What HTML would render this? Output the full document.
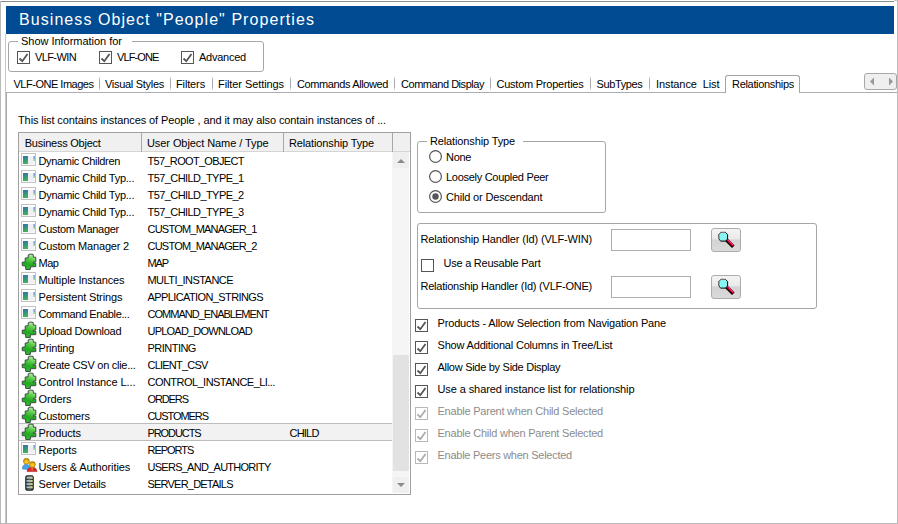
<!DOCTYPE html>
<html><head><meta charset="utf-8"><style>
html,body{margin:0;padding:0;background:#fff;width:898px;height:524px;overflow:hidden;position:relative}
.t{position:absolute;white-space:pre;font-family:"Liberation Sans", sans-serif;}
</style></head><body>
<div style="position:absolute;left:0;top:1px;width:894px;height:1px;background:#8e8e8e"></div>
<div style="position:absolute;left:894px;top:0;width:4px;height:1px;background:#c8c8c8"></div>
<div style="position:absolute;left:0;top:1px;width:1px;height:523px;background:#bababa"></div>
<div style="position:absolute;left:897px;top:0;width:1px;height:524px;background:#bcbcbc"></div>
<div style="position:absolute;left:0;top:523px;width:898px;height:1px;background:#b8b8b8"></div>
<div style="position:absolute;left:6px;top:92px;width:1px;height:431px;background:#abadb3"></div>
<div style="position:absolute;left:6px;top:6px;width:888px;height:28px;background:#004b91"></div>
<div style="position:absolute;left:5px;top:34px;width:1px;height:489px;background:#c6c6c6"></div>
<div style="position:absolute;left:8px;top:41px;width:254px;height:29px;border:1px solid #a6a6a6;border-radius:3px"></div>
<div style="position:absolute;left:18px;top:36px;width:114px;height:10px;background:#fff"></div>
<svg style="position:absolute;left:17px;top:51px" width="13" height="13" viewBox="0 0 13 13"><rect x="0.5" y="0.5" width="12" height="12" fill="#fff" stroke="#555"/><path d="M2.5 7.5 L5.3 10.2 L10.5 3" fill="none" stroke="#555" stroke-width="1.8"/></svg>
<svg style="position:absolute;left:99px;top:51px" width="13" height="13" viewBox="0 0 13 13"><rect x="0.5" y="0.5" width="12" height="12" fill="#fff" stroke="#555"/><path d="M2.5 7.5 L5.3 10.2 L10.5 3" fill="none" stroke="#555" stroke-width="1.8"/></svg>
<svg style="position:absolute;left:181px;top:51px" width="13" height="13" viewBox="0 0 13 13"><rect x="0.5" y="0.5" width="12" height="12" fill="#fff" stroke="#555"/><path d="M2.5 7.5 L5.3 10.2 L10.5 3" fill="none" stroke="#555" stroke-width="1.8"/></svg>
<div style="position:absolute;left:6px;top:92px;width:891px;height:1px;background:#abadb3"></div>
<div style="position:absolute;left:99px;top:76px;width:1px;height:15px;background:linear-gradient(#ffffff,#a8a8b0 25%,#a8a8b0 75%,#ffffff)"></div>
<div style="position:absolute;left:170px;top:76px;width:1px;height:15px;background:linear-gradient(#ffffff,#a8a8b0 25%,#a8a8b0 75%,#ffffff)"></div>
<div style="position:absolute;left:212px;top:76px;width:1px;height:15px;background:linear-gradient(#ffffff,#a8a8b0 25%,#a8a8b0 75%,#ffffff)"></div>
<div style="position:absolute;left:290px;top:76px;width:1px;height:15px;background:linear-gradient(#ffffff,#a8a8b0 25%,#a8a8b0 75%,#ffffff)"></div>
<div style="position:absolute;left:394px;top:76px;width:1px;height:15px;background:linear-gradient(#ffffff,#a8a8b0 25%,#a8a8b0 75%,#ffffff)"></div>
<div style="position:absolute;left:490px;top:76px;width:1px;height:15px;background:linear-gradient(#ffffff,#a8a8b0 25%,#a8a8b0 75%,#ffffff)"></div>
<div style="position:absolute;left:590px;top:76px;width:1px;height:15px;background:linear-gradient(#ffffff,#a8a8b0 25%,#a8a8b0 75%,#ffffff)"></div>
<div style="position:absolute;left:649px;top:76px;width:1px;height:15px;background:linear-gradient(#ffffff,#a8a8b0 25%,#a8a8b0 75%,#ffffff)"></div>
<div style="position:absolute;left:725px;top:75px;width:73px;height:17px;border:1px solid #a4a4a8;border-bottom:none;border-radius:3px 3px 0 0;background:#fff"></div>
<div style="position:absolute;left:864px;top:73px;width:31px;height:15px;border:1px solid #a8a8a8;border-radius:3px;background:#efefef"></div>
<svg style="position:absolute;left:868px;top:76px" width="30" height="11"><path d="M6 1.5 L2 5.5 L6 9.5 Z" fill="#999"/><path d="M21 1.5 L25 5.5 L21 9.5 Z" fill="#999"/></svg>
<div style="position:absolute;left:18px;top:132px;width:391px;height:361px;border:1px solid #a0a0a0;background:#fff"></div>
<div style="position:absolute;left:19px;top:133px;width:391px;height:18px;background:#f0f0f0;border-bottom:1px solid #d5d5d5"></div>
<div style="position:absolute;left:141px;top:133px;width:1px;height:19px;background:#a8a8a8"></div>
<div style="position:absolute;left:283px;top:133px;width:1px;height:19px;background:#a8a8a8"></div>
<div style="position:absolute;left:392px;top:133px;width:1px;height:19px;background:#a8a8a8"></div>
<div style="position:absolute;left:392px;top:152px;width:17px;height:341px;background:#f5f5f5"></div>
<div style="position:absolute;left:393px;top:152px;width:16px;height:16px;background:#efefef"></div>
<div style="position:absolute;left:393px;top:477px;width:16px;height:16px;background:#efefef"></div>
<div style="position:absolute;left:393px;top:355px;width:16px;height:116px;background:#e2e2e2;border-radius:1px"></div>
<svg style="position:absolute;left:396px;top:157px" width="10" height="8"><path d="M1 6 L5 2 L9 6 Z" fill="#8a8a8a"/></svg>
<svg style="position:absolute;left:396px;top:481px" width="10" height="8"><path d="M1 2 L5 6 L9 2 Z" fill="#8a8a8a"/></svg>
<div style="position:absolute;left:19px;top:423px;width:373px;height:16px;background:#f2f2f2;border-top:1px solid #bcbcbc;border-bottom:1px solid #bcbcbc"></div>
<svg style="position:absolute;left:21px;top:153px" width="15" height="13" viewBox="0 0 15 13"><defs><linearGradient id="fg0" x1="0" y1="0" x2="0.3" y2="1"><stop offset="0" stop-color="#3a6cb4"/><stop offset="0.45" stop-color="#2f8f86"/><stop offset="1" stop-color="#44b05a"/></linearGradient></defs><rect x="0.5" y="0.5" width="14" height="12" fill="#f8f8f8" stroke="#c2c2c2"/><rect x="1" y="1" width="13" height="2" fill="#fff"/><rect x="2" y="3" width="5" height="8" fill="url(#fg0)"/><rect x="7" y="3" width="6" height="8" fill="#f0f0f4"/><rect x="12.5" y="3" width="1.3" height="3" fill="#6a90d0"/><rect x="12.5" y="6" width="1.3" height="2" fill="#80c890"/></svg>
<svg style="position:absolute;left:21px;top:170px" width="15" height="13" viewBox="0 0 15 13"><defs><linearGradient id="fg1" x1="0" y1="0" x2="0.3" y2="1"><stop offset="0" stop-color="#3a6cb4"/><stop offset="0.45" stop-color="#2f8f86"/><stop offset="1" stop-color="#44b05a"/></linearGradient></defs><rect x="0.5" y="0.5" width="14" height="12" fill="#f8f8f8" stroke="#c2c2c2"/><rect x="1" y="1" width="13" height="2" fill="#fff"/><rect x="2" y="3" width="5" height="8" fill="url(#fg1)"/><rect x="7" y="3" width="6" height="8" fill="#f0f0f4"/><rect x="12.5" y="3" width="1.3" height="3" fill="#6a90d0"/><rect x="12.5" y="6" width="1.3" height="2" fill="#80c890"/></svg>
<svg style="position:absolute;left:21px;top:187px" width="15" height="13" viewBox="0 0 15 13"><defs><linearGradient id="fg2" x1="0" y1="0" x2="0.3" y2="1"><stop offset="0" stop-color="#3a6cb4"/><stop offset="0.45" stop-color="#2f8f86"/><stop offset="1" stop-color="#44b05a"/></linearGradient></defs><rect x="0.5" y="0.5" width="14" height="12" fill="#f8f8f8" stroke="#c2c2c2"/><rect x="1" y="1" width="13" height="2" fill="#fff"/><rect x="2" y="3" width="5" height="8" fill="url(#fg2)"/><rect x="7" y="3" width="6" height="8" fill="#f0f0f4"/><rect x="12.5" y="3" width="1.3" height="3" fill="#6a90d0"/><rect x="12.5" y="6" width="1.3" height="2" fill="#80c890"/></svg>
<svg style="position:absolute;left:21px;top:204px" width="15" height="13" viewBox="0 0 15 13"><defs><linearGradient id="fg3" x1="0" y1="0" x2="0.3" y2="1"><stop offset="0" stop-color="#3a6cb4"/><stop offset="0.45" stop-color="#2f8f86"/><stop offset="1" stop-color="#44b05a"/></linearGradient></defs><rect x="0.5" y="0.5" width="14" height="12" fill="#f8f8f8" stroke="#c2c2c2"/><rect x="1" y="1" width="13" height="2" fill="#fff"/><rect x="2" y="3" width="5" height="8" fill="url(#fg3)"/><rect x="7" y="3" width="6" height="8" fill="#f0f0f4"/><rect x="12.5" y="3" width="1.3" height="3" fill="#6a90d0"/><rect x="12.5" y="6" width="1.3" height="2" fill="#80c890"/></svg>
<svg style="position:absolute;left:21px;top:221px" width="15" height="13" viewBox="0 0 15 13"><defs><linearGradient id="fg4" x1="0" y1="0" x2="0.3" y2="1"><stop offset="0" stop-color="#3a6cb4"/><stop offset="0.45" stop-color="#2f8f86"/><stop offset="1" stop-color="#44b05a"/></linearGradient></defs><rect x="0.5" y="0.5" width="14" height="12" fill="#f8f8f8" stroke="#c2c2c2"/><rect x="1" y="1" width="13" height="2" fill="#fff"/><rect x="2" y="3" width="5" height="8" fill="url(#fg4)"/><rect x="7" y="3" width="6" height="8" fill="#f0f0f4"/><rect x="12.5" y="3" width="1.3" height="3" fill="#6a90d0"/><rect x="12.5" y="6" width="1.3" height="2" fill="#80c890"/></svg>
<svg style="position:absolute;left:21px;top:238px" width="15" height="13" viewBox="0 0 15 13"><defs><linearGradient id="fg5" x1="0" y1="0" x2="0.3" y2="1"><stop offset="0" stop-color="#3a6cb4"/><stop offset="0.45" stop-color="#2f8f86"/><stop offset="1" stop-color="#44b05a"/></linearGradient></defs><rect x="0.5" y="0.5" width="14" height="12" fill="#f8f8f8" stroke="#c2c2c2"/><rect x="1" y="1" width="13" height="2" fill="#fff"/><rect x="2" y="3" width="5" height="8" fill="url(#fg5)"/><rect x="7" y="3" width="6" height="8" fill="#f0f0f4"/><rect x="12.5" y="3" width="1.3" height="3" fill="#6a90d0"/><rect x="12.5" y="6" width="1.3" height="2" fill="#80c890"/></svg>
<svg style="position:absolute;left:20px;top:253px" width="18" height="18" viewBox="0 0 18 18"><defs><linearGradient id="pg6" x1="0.6" y1="0" x2="0.3" y2="1"><stop offset="0" stop-color="#b8f2a8"/><stop offset="0.3" stop-color="#5ccc4c"/><stop offset="0.65" stop-color="#1faa1f"/><stop offset="1" stop-color="#3cbc3c"/></linearGradient></defs><path d="M8.2,4.8 L8.2,2 Q8.6,1.1 10.6,1.1 L13.1,1.4 L13.4,4.2 L15.8,4.2 L15.8,9 L13.2,9.3 L13.2,10.2 L15.8,10.2 L15.8,13.6 L10.5,13.8 L10.3,16.4 L5.8,16.5 L5.5,13 L2.3,12.6 L2.2,9.2 L5.2,9 L5.2,5 Z" fill="url(#pg6)" stroke="#3c4a44" stroke-width="1" stroke-linejoin="round"/><path d="M13.2,10.2 L13.2,12.5" stroke="#2a7a2a" stroke-width="0.7"/></svg>
<svg style="position:absolute;left:21px;top:272px" width="15" height="13" viewBox="0 0 15 13"><defs><linearGradient id="fg7" x1="0" y1="0" x2="0.3" y2="1"><stop offset="0" stop-color="#3a6cb4"/><stop offset="0.45" stop-color="#2f8f86"/><stop offset="1" stop-color="#44b05a"/></linearGradient></defs><rect x="0.5" y="0.5" width="14" height="12" fill="#f8f8f8" stroke="#c2c2c2"/><rect x="1" y="1" width="13" height="2" fill="#fff"/><rect x="2" y="3" width="5" height="8" fill="url(#fg7)"/><rect x="7" y="3" width="6" height="8" fill="#f0f0f4"/><rect x="12.5" y="3" width="1.3" height="3" fill="#6a90d0"/><rect x="12.5" y="6" width="1.3" height="2" fill="#80c890"/></svg>
<svg style="position:absolute;left:21px;top:289px" width="15" height="13" viewBox="0 0 15 13"><defs><linearGradient id="fg8" x1="0" y1="0" x2="0.3" y2="1"><stop offset="0" stop-color="#3a6cb4"/><stop offset="0.45" stop-color="#2f8f86"/><stop offset="1" stop-color="#44b05a"/></linearGradient></defs><rect x="0.5" y="0.5" width="14" height="12" fill="#f8f8f8" stroke="#c2c2c2"/><rect x="1" y="1" width="13" height="2" fill="#fff"/><rect x="2" y="3" width="5" height="8" fill="url(#fg8)"/><rect x="7" y="3" width="6" height="8" fill="#f0f0f4"/><rect x="12.5" y="3" width="1.3" height="3" fill="#6a90d0"/><rect x="12.5" y="6" width="1.3" height="2" fill="#80c890"/></svg>
<svg style="position:absolute;left:21px;top:306px" width="15" height="13" viewBox="0 0 15 13"><defs><linearGradient id="fg9" x1="0" y1="0" x2="0.3" y2="1"><stop offset="0" stop-color="#3a6cb4"/><stop offset="0.45" stop-color="#2f8f86"/><stop offset="1" stop-color="#44b05a"/></linearGradient></defs><rect x="0.5" y="0.5" width="14" height="12" fill="#f8f8f8" stroke="#c2c2c2"/><rect x="1" y="1" width="13" height="2" fill="#fff"/><rect x="2" y="3" width="5" height="8" fill="url(#fg9)"/><rect x="7" y="3" width="6" height="8" fill="#f0f0f4"/><rect x="12.5" y="3" width="1.3" height="3" fill="#6a90d0"/><rect x="12.5" y="6" width="1.3" height="2" fill="#80c890"/></svg>
<svg style="position:absolute;left:20px;top:321px" width="18" height="18" viewBox="0 0 18 18"><defs><linearGradient id="pg10" x1="0.6" y1="0" x2="0.3" y2="1"><stop offset="0" stop-color="#b8f2a8"/><stop offset="0.3" stop-color="#5ccc4c"/><stop offset="0.65" stop-color="#1faa1f"/><stop offset="1" stop-color="#3cbc3c"/></linearGradient></defs><path d="M8.2,4.8 L8.2,2 Q8.6,1.1 10.6,1.1 L13.1,1.4 L13.4,4.2 L15.8,4.2 L15.8,9 L13.2,9.3 L13.2,10.2 L15.8,10.2 L15.8,13.6 L10.5,13.8 L10.3,16.4 L5.8,16.5 L5.5,13 L2.3,12.6 L2.2,9.2 L5.2,9 L5.2,5 Z" fill="url(#pg10)" stroke="#3c4a44" stroke-width="1" stroke-linejoin="round"/><path d="M13.2,10.2 L13.2,12.5" stroke="#2a7a2a" stroke-width="0.7"/></svg>
<svg style="position:absolute;left:20px;top:338px" width="18" height="18" viewBox="0 0 18 18"><defs><linearGradient id="pg11" x1="0.6" y1="0" x2="0.3" y2="1"><stop offset="0" stop-color="#b8f2a8"/><stop offset="0.3" stop-color="#5ccc4c"/><stop offset="0.65" stop-color="#1faa1f"/><stop offset="1" stop-color="#3cbc3c"/></linearGradient></defs><path d="M8.2,4.8 L8.2,2 Q8.6,1.1 10.6,1.1 L13.1,1.4 L13.4,4.2 L15.8,4.2 L15.8,9 L13.2,9.3 L13.2,10.2 L15.8,10.2 L15.8,13.6 L10.5,13.8 L10.3,16.4 L5.8,16.5 L5.5,13 L2.3,12.6 L2.2,9.2 L5.2,9 L5.2,5 Z" fill="url(#pg11)" stroke="#3c4a44" stroke-width="1" stroke-linejoin="round"/><path d="M13.2,10.2 L13.2,12.5" stroke="#2a7a2a" stroke-width="0.7"/></svg>
<svg style="position:absolute;left:20px;top:355px" width="18" height="18" viewBox="0 0 18 18"><defs><linearGradient id="pg12" x1="0.6" y1="0" x2="0.3" y2="1"><stop offset="0" stop-color="#b8f2a8"/><stop offset="0.3" stop-color="#5ccc4c"/><stop offset="0.65" stop-color="#1faa1f"/><stop offset="1" stop-color="#3cbc3c"/></linearGradient></defs><path d="M8.2,4.8 L8.2,2 Q8.6,1.1 10.6,1.1 L13.1,1.4 L13.4,4.2 L15.8,4.2 L15.8,9 L13.2,9.3 L13.2,10.2 L15.8,10.2 L15.8,13.6 L10.5,13.8 L10.3,16.4 L5.8,16.5 L5.5,13 L2.3,12.6 L2.2,9.2 L5.2,9 L5.2,5 Z" fill="url(#pg12)" stroke="#3c4a44" stroke-width="1" stroke-linejoin="round"/><path d="M13.2,10.2 L13.2,12.5" stroke="#2a7a2a" stroke-width="0.7"/></svg>
<svg style="position:absolute;left:20px;top:372px" width="18" height="18" viewBox="0 0 18 18"><defs><linearGradient id="pg13" x1="0.6" y1="0" x2="0.3" y2="1"><stop offset="0" stop-color="#b8f2a8"/><stop offset="0.3" stop-color="#5ccc4c"/><stop offset="0.65" stop-color="#1faa1f"/><stop offset="1" stop-color="#3cbc3c"/></linearGradient></defs><path d="M8.2,4.8 L8.2,2 Q8.6,1.1 10.6,1.1 L13.1,1.4 L13.4,4.2 L15.8,4.2 L15.8,9 L13.2,9.3 L13.2,10.2 L15.8,10.2 L15.8,13.6 L10.5,13.8 L10.3,16.4 L5.8,16.5 L5.5,13 L2.3,12.6 L2.2,9.2 L5.2,9 L5.2,5 Z" fill="url(#pg13)" stroke="#3c4a44" stroke-width="1" stroke-linejoin="round"/><path d="M13.2,10.2 L13.2,12.5" stroke="#2a7a2a" stroke-width="0.7"/></svg>
<svg style="position:absolute;left:20px;top:389px" width="18" height="18" viewBox="0 0 18 18"><defs><linearGradient id="pg14" x1="0.6" y1="0" x2="0.3" y2="1"><stop offset="0" stop-color="#b8f2a8"/><stop offset="0.3" stop-color="#5ccc4c"/><stop offset="0.65" stop-color="#1faa1f"/><stop offset="1" stop-color="#3cbc3c"/></linearGradient></defs><path d="M8.2,4.8 L8.2,2 Q8.6,1.1 10.6,1.1 L13.1,1.4 L13.4,4.2 L15.8,4.2 L15.8,9 L13.2,9.3 L13.2,10.2 L15.8,10.2 L15.8,13.6 L10.5,13.8 L10.3,16.4 L5.8,16.5 L5.5,13 L2.3,12.6 L2.2,9.2 L5.2,9 L5.2,5 Z" fill="url(#pg14)" stroke="#3c4a44" stroke-width="1" stroke-linejoin="round"/><path d="M13.2,10.2 L13.2,12.5" stroke="#2a7a2a" stroke-width="0.7"/></svg>
<svg style="position:absolute;left:20px;top:406px" width="18" height="18" viewBox="0 0 18 18"><defs><linearGradient id="pg15" x1="0.6" y1="0" x2="0.3" y2="1"><stop offset="0" stop-color="#b8f2a8"/><stop offset="0.3" stop-color="#5ccc4c"/><stop offset="0.65" stop-color="#1faa1f"/><stop offset="1" stop-color="#3cbc3c"/></linearGradient></defs><path d="M8.2,4.8 L8.2,2 Q8.6,1.1 10.6,1.1 L13.1,1.4 L13.4,4.2 L15.8,4.2 L15.8,9 L13.2,9.3 L13.2,10.2 L15.8,10.2 L15.8,13.6 L10.5,13.8 L10.3,16.4 L5.8,16.5 L5.5,13 L2.3,12.6 L2.2,9.2 L5.2,9 L5.2,5 Z" fill="url(#pg15)" stroke="#3c4a44" stroke-width="1" stroke-linejoin="round"/><path d="M13.2,10.2 L13.2,12.5" stroke="#2a7a2a" stroke-width="0.7"/></svg>
<svg style="position:absolute;left:20px;top:423px" width="18" height="18" viewBox="0 0 18 18"><defs><linearGradient id="pg16" x1="0.6" y1="0" x2="0.3" y2="1"><stop offset="0" stop-color="#b8f2a8"/><stop offset="0.3" stop-color="#5ccc4c"/><stop offset="0.65" stop-color="#1faa1f"/><stop offset="1" stop-color="#3cbc3c"/></linearGradient></defs><path d="M8.2,4.8 L8.2,2 Q8.6,1.1 10.6,1.1 L13.1,1.4 L13.4,4.2 L15.8,4.2 L15.8,9 L13.2,9.3 L13.2,10.2 L15.8,10.2 L15.8,13.6 L10.5,13.8 L10.3,16.4 L5.8,16.5 L5.5,13 L2.3,12.6 L2.2,9.2 L5.2,9 L5.2,5 Z" fill="url(#pg16)" stroke="#3c4a44" stroke-width="1" stroke-linejoin="round"/><path d="M13.2,10.2 L13.2,12.5" stroke="#2a7a2a" stroke-width="0.7"/></svg>
<svg style="position:absolute;left:21px;top:442px" width="15" height="13" viewBox="0 0 15 13"><defs><linearGradient id="fg17" x1="0" y1="0" x2="0.3" y2="1"><stop offset="0" stop-color="#3a6cb4"/><stop offset="0.45" stop-color="#2f8f86"/><stop offset="1" stop-color="#44b05a"/></linearGradient></defs><rect x="0.5" y="0.5" width="14" height="12" fill="#f8f8f8" stroke="#c2c2c2"/><rect x="1" y="1" width="13" height="2" fill="#fff"/><rect x="2" y="3" width="5" height="8" fill="url(#fg17)"/><rect x="7" y="3" width="6" height="8" fill="#f0f0f4"/><rect x="12.5" y="3" width="1.3" height="3" fill="#6a90d0"/><rect x="12.5" y="6" width="1.3" height="2" fill="#80c890"/></svg>
<svg style="position:absolute;left:22px;top:458px" width="16" height="15" viewBox="0 0 16 15"><defs><radialGradient id="hg" cx="0.5" cy="0.65" r="0.6"><stop offset="0" stop-color="#ffd830"/><stop offset="0.6" stop-color="#e8b010"/><stop offset="1" stop-color="#a87808"/></radialGradient></defs><path d="M0.3,11 Q0.5,6.3 4.2,6.3 Q7.2,6.3 7.8,9 L6.5,11.6 Z" fill="#4aa0e8" stroke="#2a78c0" stroke-width="0.5"/><circle cx="4.4" cy="3.2" r="3" fill="url(#hg)" stroke="#9a7010" stroke-width="0.5"/><path d="M5,13.6 Q5.3,9.3 10,9.3 Q14.7,9.3 15,13.6 Z" fill="#dc2626" stroke="#a01818" stroke-width="0.5"/><path d="M9.5,9.6 L10.7,9.6 L10.3,13 L9.9,13 Z" fill="#f2a050"/><circle cx="10.4" cy="6.4" r="3" fill="url(#hg)" stroke="#9a7010" stroke-width="0.5"/></svg>
<svg style="position:absolute;left:25px;top:475px" width="9" height="16" viewBox="0 0 9 16"><defs><linearGradient id="sg" x1="0" y1="0" x2="1" y2="0"><stop offset="0" stop-color="#1e2428"/><stop offset="0.5" stop-color="#56616a"/><stop offset="1" stop-color="#1e2428"/></linearGradient></defs><rect x="0.5" y="0.5" width="8" height="15" rx="1.8" fill="url(#sg)" stroke="#1a1a1a" stroke-width="0.6"/><rect x="1.5" y="1.8" width="6" height="1.8" fill="#a9bfcc"/><rect x="1.5" y="5" width="6" height="1.8" fill="#a9bfcc"/><rect x="1.5" y="8.2" width="6" height="1.8" fill="#a9bfcc"/><rect x="1.5" y="11.4" width="6" height="1.8" fill="#a9bfcc"/><rect x="5.5" y="1.8" width="2" height="1.8" fill="#e0d040"/><rect x="5.5" y="5" width="2" height="1.8" fill="#e0d040"/><rect x="5.5" y="8.2" width="2" height="1.8" fill="#e0d040"/><rect x="5.5" y="11.4" width="2" height="1.8" fill="#e0d040"/></svg>
<div style="position:absolute;left:417px;top:141px;width:187px;height:70px;border:1px solid #a6a6a6;border-radius:3px"></div>
<div style="position:absolute;left:427px;top:136px;width:96px;height:10px;background:#fff"></div>
<svg style="position:absolute;left:429.0px;top:150.0px" width="13" height="13" viewBox="0 0 13 13"><circle cx="6.5" cy="6.5" r="5.9" fill="#fff" stroke="#555" stroke-width="1.2"/></svg>
<svg style="position:absolute;left:429.0px;top:170.0px" width="13" height="13" viewBox="0 0 13 13"><circle cx="6.5" cy="6.5" r="5.9" fill="#fff" stroke="#555" stroke-width="1.2"/></svg>
<svg style="position:absolute;left:429.0px;top:190.0px" width="13" height="13" viewBox="0 0 13 13"><circle cx="6.5" cy="6.5" r="5.9" fill="#fff" stroke="#555" stroke-width="1.2"/><circle cx="6.5" cy="6.5" r="3.2" fill="#555"/></svg>
<div style="position:absolute;left:417px;top:223px;width:398px;height:84px;border:1px solid #a6a6a6;border-radius:3px"></div>
<svg style="position:absolute;left:421px;top:259px" width="13" height="13" viewBox="0 0 13 13"><rect x="0.5" y="0.5" width="12" height="12" fill="#fff" stroke="#555"/></svg>
<div style="position:absolute;left:611px;top:229px;width:78px;height:20px;border:1px solid #abadb3;background:#fff"></div>
<div style="position:absolute;left:611px;top:276px;width:78px;height:20px;border:1px solid #abadb3;background:#fff"></div>
<div style="position:absolute;left:711px;top:228px;width:28px;height:22px;border:1px solid #acacac;border-radius:3px;background:linear-gradient(#f4f4f4 0%,#e9e9e9 45%,#d3d3d3 50%,#dadada 100%)"></div><svg style="position:absolute;left:711px;top:228px" width="30" height="24" viewBox="0 0 30 24"><path d="M15 11.5 L22.3 18.8" stroke="#000" stroke-width="3.6" stroke-linecap="butt"/><path d="M15.6 11.2 L22.3 17.9" stroke="#f00010" stroke-width="2"/><path d="M16 11 L22 17" stroke="#ff30c8" stroke-width="0.8"/><polygon points="9.8,4.4 14.5,4.4 16.6,6.5 16.6,11 14.5,13.1 9.8,13.1 7.7,11 7.7,6.5" fill="#88f4f4" stroke="#000" stroke-width="1"/><path d="M7.7 11 L7.7 6.5 L9.8 4.4 L14.5 4.4" fill="none" stroke="#808080" stroke-width="1"/></svg>
<div style="position:absolute;left:711px;top:275px;width:28px;height:22px;border:1px solid #acacac;border-radius:3px;background:linear-gradient(#f4f4f4 0%,#e9e9e9 45%,#d3d3d3 50%,#dadada 100%)"></div><svg style="position:absolute;left:711px;top:275px" width="30" height="24" viewBox="0 0 30 24"><path d="M15 11.5 L22.3 18.8" stroke="#000" stroke-width="3.6" stroke-linecap="butt"/><path d="M15.6 11.2 L22.3 17.9" stroke="#f00010" stroke-width="2"/><path d="M16 11 L22 17" stroke="#ff30c8" stroke-width="0.8"/><polygon points="9.8,4.4 14.5,4.4 16.6,6.5 16.6,11 14.5,13.1 9.8,13.1 7.7,11 7.7,6.5" fill="#88f4f4" stroke="#000" stroke-width="1"/><path d="M7.7 11 L7.7 6.5 L9.8 4.4 L14.5 4.4" fill="none" stroke="#808080" stroke-width="1"/></svg>
<svg style="position:absolute;left:415px;top:319px" width="13" height="13" viewBox="0 0 13 13"><rect x="0.5" y="0.5" width="12" height="12" fill="#fff" stroke="#555"/><path d="M2.5 7.5 L5.3 10.2 L10.5 3" fill="none" stroke="#555" stroke-width="1.8"/></svg>
<svg style="position:absolute;left:415px;top:341px" width="13" height="13" viewBox="0 0 13 13"><rect x="0.5" y="0.5" width="12" height="12" fill="#fff" stroke="#555"/><path d="M2.5 7.5 L5.3 10.2 L10.5 3" fill="none" stroke="#555" stroke-width="1.8"/></svg>
<svg style="position:absolute;left:415px;top:363px" width="13" height="13" viewBox="0 0 13 13"><rect x="0.5" y="0.5" width="12" height="12" fill="#fff" stroke="#555"/><path d="M2.5 7.5 L5.3 10.2 L10.5 3" fill="none" stroke="#555" stroke-width="1.8"/></svg>
<svg style="position:absolute;left:415px;top:385px" width="13" height="13" viewBox="0 0 13 13"><rect x="0.5" y="0.5" width="12" height="12" fill="#fff" stroke="#555"/><path d="M2.5 7.5 L5.3 10.2 L10.5 3" fill="none" stroke="#555" stroke-width="1.8"/></svg>
<svg style="position:absolute;left:415px;top:407px" width="13" height="13" viewBox="0 0 13 13"><rect x="0.5" y="0.5" width="12" height="12" fill="#fff" stroke="#b8b8b8"/><path d="M2.5 7.5 L5.3 10.2 L10.5 3" fill="none" stroke="#ababab" stroke-width="1.8"/></svg>
<svg style="position:absolute;left:415px;top:429px" width="13" height="13" viewBox="0 0 13 13"><rect x="0.5" y="0.5" width="12" height="12" fill="#fff" stroke="#b8b8b8"/><path d="M2.5 7.5 L5.3 10.2 L10.5 3" fill="none" stroke="#ababab" stroke-width="1.8"/></svg>
<svg style="position:absolute;left:415px;top:451px" width="13" height="13" viewBox="0 0 13 13"><rect x="0.5" y="0.5" width="12" height="12" fill="#fff" stroke="#b8b8b8"/><path d="M2.5 7.5 L5.3 10.2 L10.5 3" fill="none" stroke="#ababab" stroke-width="1.8"/></svg>
<div class="t" style="left:19px;top:9.96px;font-size:16px;line-height:19px;letter-spacing:1.068px;color:#fff">Business Object &quot;People&quot; Properties</div>
<div class="t" style="left:21px;top:34.69px;font-size:11px;line-height:13px;letter-spacing:-0.025px;color:#000">Show Information for</div>
<div class="t" style="left:35px;top:50.69px;font-size:11px;line-height:13px;letter-spacing:-0.605px;color:#000">VLF-WIN</div>
<div class="t" style="left:117px;top:50.69px;font-size:11px;line-height:13px;letter-spacing:-0.884px;color:#000">VLF-ONE</div>
<div class="t" style="left:199px;top:50.69px;font-size:11px;line-height:13px;letter-spacing:-0.242px;color:#000">Advanced</div>
<div class="t" style="left:13.5px;top:77.69px;font-size:11px;line-height:13px;letter-spacing:-0.487px;color:#000">VLF-ONE Images</div>
<div class="t" style="left:105px;top:77.69px;font-size:11px;line-height:13px;letter-spacing:-0.291px;color:#000">Visual Styles</div>
<div class="t" style="left:176px;top:77.69px;font-size:11px;line-height:13px;letter-spacing:-0.136px;color:#000">Filters</div>
<div class="t" style="left:218px;top:77.69px;font-size:11px;line-height:13px;letter-spacing:-0.083px;color:#000">Filter Settings</div>
<div class="t" style="left:297px;top:77.69px;font-size:11px;line-height:13px;letter-spacing:-0.389px;color:#000">Commands Allowed</div>
<div class="t" style="left:401px;top:77.69px;font-size:11px;line-height:13px;letter-spacing:-0.458px;color:#000">Command Display</div>
<div class="t" style="left:496.5px;top:77.69px;font-size:11px;line-height:13px;letter-spacing:-0.241px;color:#000">Custom Properties</div>
<div class="t" style="left:596.5px;top:77.69px;font-size:11px;line-height:13px;letter-spacing:-0.365px;color:#000">SubTypes</div>
<div class="t" style="left:656px;top:77.69px;font-size:11px;line-height:13px;letter-spacing:-0.095px;color:#000">Instance  List</div>
<div class="t" style="left:732px;top:77.69px;font-size:11px;line-height:13px;letter-spacing:-0.311px;color:#000">Relationships</div>
<div class="t" style="left:18px;top:113.69px;font-size:11px;line-height:13px;letter-spacing:-0.099px;color:#000">This list contains instances of People , and it may also contain instances of ...</div>
<div class="t" style="left:24.7px;top:136.69px;font-size:11px;line-height:13px;letter-spacing:-0.232px;color:#000">Business Object</div>
<div class="t" style="left:147px;top:136.69px;font-size:11px;line-height:13px;letter-spacing:-0.078px;color:#000">User Object Name / Type</div>
<div class="t" style="left:289px;top:136.69px;font-size:11px;line-height:13px;letter-spacing:-0.132px;color:#000">Relationship Type</div>
<div class="t" style="left:38.5px;top:154.69px;font-size:11px;line-height:13px;letter-spacing:-0.332px;color:#000">Dynamic Children</div>
<div class="t" style="left:147.5px;top:154.69px;font-size:11px;line-height:13px;letter-spacing:-0.677px;color:#000">T57_ROOT_OBJECT</div>
<div class="t" style="left:38.5px;top:171.69px;font-size:11px;line-height:13px;letter-spacing:-0.249px;color:#000">Dynamic Child Typ...</div>
<div class="t" style="left:147.5px;top:171.69px;font-size:11px;line-height:13px;letter-spacing:-0.573px;color:#000">T57_CHILD_TYPE_1</div>
<div class="t" style="left:38.5px;top:188.69px;font-size:11px;line-height:13px;letter-spacing:-0.249px;color:#000">Dynamic Child Typ...</div>
<div class="t" style="left:147.5px;top:188.69px;font-size:11px;line-height:13px;letter-spacing:-0.573px;color:#000">T57_CHILD_TYPE_2</div>
<div class="t" style="left:38.5px;top:205.69px;font-size:11px;line-height:13px;letter-spacing:-0.249px;color:#000">Dynamic Child Typ...</div>
<div class="t" style="left:147.5px;top:205.69px;font-size:11px;line-height:13px;letter-spacing:-0.573px;color:#000">T57_CHILD_TYPE_3</div>
<div class="t" style="left:38.5px;top:222.69px;font-size:11px;line-height:13px;letter-spacing:-0.277px;color:#000">Custom Manager</div>
<div class="t" style="left:147.5px;top:222.69px;font-size:11px;line-height:13px;letter-spacing:-0.777px;color:#000">CUSTOM_MANAGER_1</div>
<div class="t" style="left:38.5px;top:239.69px;font-size:11px;line-height:13px;letter-spacing:-0.190px;color:#000">Custom Manager 2</div>
<div class="t" style="left:147.5px;top:239.69px;font-size:11px;line-height:13px;letter-spacing:-0.777px;color:#000">CUSTOM_MANAGER_2</div>
<div class="t" style="left:38.5px;top:256.69px;font-size:11px;line-height:13px;letter-spacing:-0.535px;color:#000">Map</div>
<div class="t" style="left:147.5px;top:256.69px;font-size:11px;line-height:13px;letter-spacing:-1.115px;color:#000">MAP</div>
<div class="t" style="left:38.5px;top:273.69px;font-size:11px;line-height:13px;letter-spacing:-0.119px;color:#000">Multiple Instances</div>
<div class="t" style="left:147.5px;top:273.69px;font-size:11px;line-height:13px;letter-spacing:-0.544px;color:#000">MULTI_INSTANCE</div>
<div class="t" style="left:38.5px;top:290.69px;font-size:11px;line-height:13px;letter-spacing:-0.134px;color:#000">Persistent Strings</div>
<div class="t" style="left:147.5px;top:290.69px;font-size:11px;line-height:13px;letter-spacing:-0.602px;color:#000">APPLICATION_STRINGS</div>
<div class="t" style="left:38.5px;top:307.69px;font-size:11px;line-height:13px;letter-spacing:-0.366px;color:#000">Command Enable...</div>
<div class="t" style="left:147.5px;top:307.69px;font-size:11px;line-height:13px;letter-spacing:-0.981px;color:#000">COMMAND_ENABLEMENT</div>
<div class="t" style="left:38.5px;top:324.69px;font-size:11px;line-height:13px;letter-spacing:-0.270px;color:#000">Upload Download</div>
<div class="t" style="left:147.5px;top:324.69px;font-size:11px;line-height:13px;letter-spacing:-0.783px;color:#000">UPLOAD_DOWNLOAD</div>
<div class="t" style="left:38.5px;top:341.69px;font-size:11px;line-height:13px;letter-spacing:-0.200px;color:#000">Printing</div>
<div class="t" style="left:147.5px;top:341.69px;font-size:11px;line-height:13px;letter-spacing:-0.520px;color:#000">PRINTING</div>
<div class="t" style="left:38.5px;top:358.69px;font-size:11px;line-height:13px;letter-spacing:-0.268px;color:#000">Create CSV on clie...</div>
<div class="t" style="left:147.5px;top:358.69px;font-size:11px;line-height:13px;letter-spacing:-0.786px;color:#000">CLIENT_CSV</div>
<div class="t" style="left:38.5px;top:375.69px;font-size:11px;line-height:13px;letter-spacing:-0.064px;color:#000">Control Instance L...</div>
<div class="t" style="left:147.5px;top:375.69px;font-size:11px;line-height:13px;letter-spacing:-0.535px;color:#000">CONTROL_INSTANCE_LI...</div>
<div class="t" style="left:38.5px;top:392.69px;font-size:11px;line-height:13px;letter-spacing:-0.104px;color:#000">Orders</div>
<div class="t" style="left:147.5px;top:392.69px;font-size:11px;line-height:13px;letter-spacing:-1.110px;color:#000">ORDERS</div>
<div class="t" style="left:38.5px;top:409.69px;font-size:11px;line-height:13px;letter-spacing:-0.221px;color:#000">Customers</div>
<div class="t" style="left:147.5px;top:409.69px;font-size:11px;line-height:13px;letter-spacing:-1.077px;color:#000">CUSTOMERS</div>
<div class="t" style="left:38.5px;top:426.69px;font-size:11px;line-height:13px;letter-spacing:-0.140px;color:#000">Products</div>
<div class="t" style="left:147.5px;top:426.69px;font-size:11px;line-height:13px;letter-spacing:-1.079px;color:#000">PRODUCTS</div>
<div class="t" style="left:289.5px;top:426.69px;font-size:11px;line-height:13px;letter-spacing:-0.783px;color:#000">CHILD</div>
<div class="t" style="left:38.5px;top:443.69px;font-size:11px;line-height:13px;letter-spacing:-0.033px;color:#000">Reports</div>
<div class="t" style="left:147.5px;top:443.69px;font-size:11px;line-height:13px;letter-spacing:-1.026px;color:#000">REPORTS</div>
<div class="t" style="left:38.5px;top:460.69px;font-size:11px;line-height:13px;letter-spacing:-0.097px;color:#000">Users &amp; Authorities</div>
<div class="t" style="left:147.5px;top:460.69px;font-size:11px;line-height:13px;letter-spacing:-0.733px;color:#000">USERS_AND_AUTHORITY</div>
<div class="t" style="left:38.5px;top:477.69px;font-size:11px;line-height:13px;letter-spacing:-0.113px;color:#000">Server Details</div>
<div class="t" style="left:147.5px;top:477.69px;font-size:11px;line-height:13px;letter-spacing:-0.785px;color:#000">SERVER_DETAILS</div>
<div class="t" style="left:430px;top:134.69px;font-size:11px;line-height:13px;letter-spacing:-0.132px;color:#000">Relationship Type</div>
<div class="t" style="left:446px;top:150.69px;font-size:11px;line-height:13px;letter-spacing:-0.299px;color:#000">None</div>
<div class="t" style="left:446px;top:170.69px;font-size:11px;line-height:13px;letter-spacing:-0.287px;color:#000">Loosely Coupled Peer</div>
<div class="t" style="left:446px;top:190.69px;font-size:11px;line-height:13px;letter-spacing:-0.172px;color:#000">Child or Descendant</div>
<div class="t" style="left:420.5px;top:232.69px;font-size:11px;line-height:13px;letter-spacing:-0.165px;color:#000">Relationship Handler (Id) (VLF-WIN)</div>
<div class="t" style="left:443.5px;top:256.69px;font-size:11px;line-height:13px;letter-spacing:-0.237px;color:#000">Use a Reusable Part</div>
<div class="t" style="left:420.5px;top:279.69px;font-size:11px;line-height:13px;letter-spacing:-0.235px;color:#000">Relationship Handler (Id) (VLF-ONE)</div>
<div class="t" style="left:437.5px;top:316.69px;font-size:11px;line-height:13px;letter-spacing:-0.160px;color:#000">Products - Allow Selection from Navigation Pane</div>
<div class="t" style="left:437.5px;top:338.69px;font-size:11px;line-height:13px;letter-spacing:-0.184px;color:#000">Show Additional Columns in Tree/List</div>
<div class="t" style="left:437.5px;top:360.69px;font-size:11px;line-height:13px;letter-spacing:-0.286px;color:#000">Allow Side by Side Display</div>
<div class="t" style="left:437.5px;top:382.69px;font-size:11px;line-height:13px;letter-spacing:-0.097px;color:#000">Use a shared instance list for relationship</div>
<div class="t" style="left:437.5px;top:404.69px;font-size:11px;line-height:13px;letter-spacing:-0.229px;color:#8c8c8c">Enable Parent when Child Selected</div>
<div class="t" style="left:437.5px;top:426.69px;font-size:11px;line-height:13px;letter-spacing:-0.229px;color:#8c8c8c">Enable Child when Parent Selected</div>
<div class="t" style="left:437.5px;top:448.69px;font-size:11px;line-height:13px;letter-spacing:-0.264px;color:#8c8c8c">Enable Peers when Selected</div>
</body></html>
